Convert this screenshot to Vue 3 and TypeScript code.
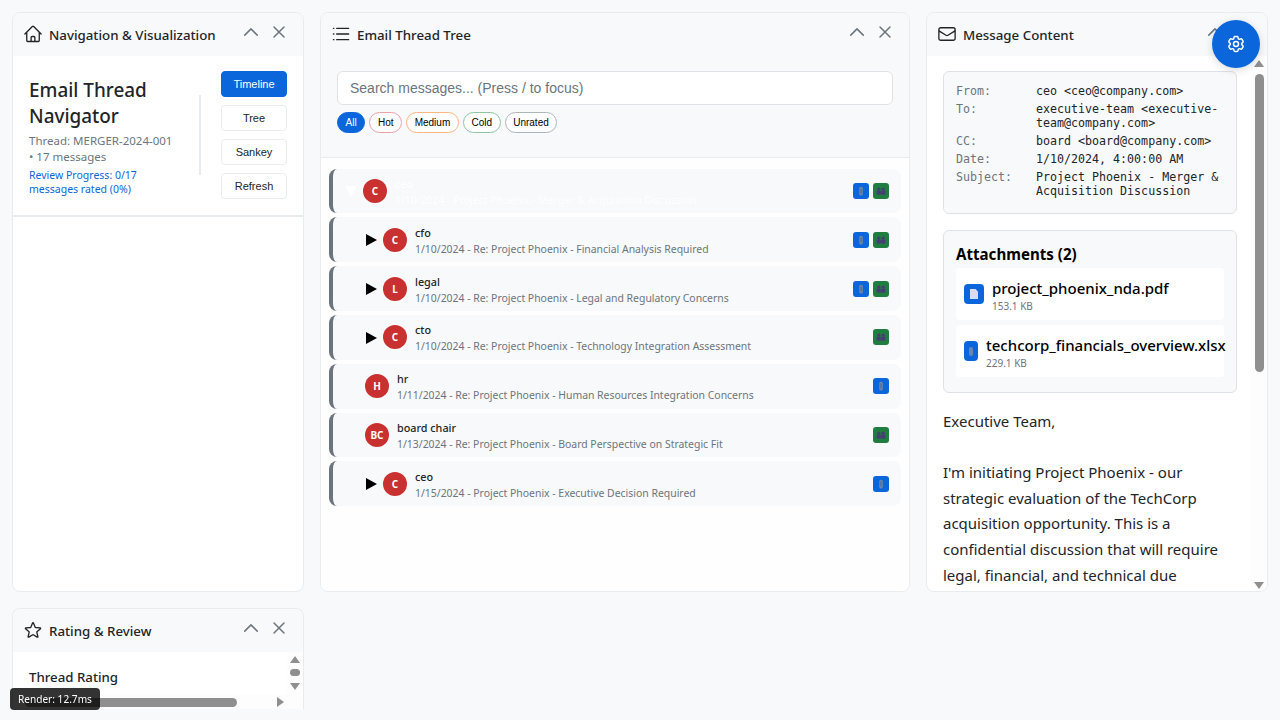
<template>
  <div class="page">
    <section class="panel nav-panel">
      <header class="panel-head">
        <svg class="head-icon" viewBox="0 0 24 24"><path d="M2.25 12l8.954-8.955c.44-.439 1.152-.439 1.591 0L21.75 12M4.5 9.75v10.125c0 .621.504 1.125 1.125 1.125H9.75v-4.875c0-.621.504-1.125 1.125-1.125h2.25c.621 0 1.125.504 1.125 1.125V21h4.125c.621 0 1.125-.504 1.125-1.125V9.75M8.25 21h8.25" /></svg>
        <h2>Navigation &amp; Visualization</h2>
        <div class="head-actions">
          <svg viewBox="0 0 24 24"><path d="M4.5 15.75l7.5-7.5 7.5 7.5" /></svg>
          <svg viewBox="0 0 24 24"><path d="M6 18L18 6M6 6l12 12" /></svg>
        </div>
      </header>
      <div class="nav-top">
        <div class="nav-info">
          <h1>Email Thread Navigator</h1>
          <p class="thread-meta">Thread: MERGER-2024-001 <br />• 17 messages</p>
          <p class="progress">Review Progress: 0/17 messages rated (0%)</p>
        </div>
        <div class="nav-divider"></div>
        <div class="nav-buttons">
          <button class="btn active">Timeline</button>
          <button class="btn">Tree</button>
          <button class="btn">Sankey</button>
          <button class="btn">Refresh</button>
        </div>
      </div>
    </section>

    <section class="panel tree-panel">
      <header class="panel-head">
        <svg class="head-icon" viewBox="0 0 24 24"><path d="M6.8 5.2h14.4M6.8 12h14.4M6.8 18.8h14.4M2.9 5.2h.6M2.9 12h.6M2.9 18.8h.6" /></svg>
        <h2>Email Thread Tree</h2>
        <div class="head-actions">
          <svg viewBox="0 0 24 24"><path d="M4.5 15.75l7.5-7.5 7.5 7.5" /></svg>
          <svg viewBox="0 0 24 24"><path d="M6 18L18 6M6 6l12 12" /></svg>
        </div>
      </header>
      <div class="search-area">
        <input class="search" placeholder="Search messages... (Press / to focus)" />
        <div class="chips">
          <span v-for="c in chips" :key="c.label" class="chip" :class="c.cls">{{ c.label }}</span>
        </div>
      </div>
      <div class="tree-list">
        <div v-for="m in messages" :key="m.sub" class="row" :class="{ selected: m.root, child: !m.root }">
          <span v-if="m.toggle" class="toggle"><i :class="m.root ? 'tri-down' : 'tri-right'"></i></span>
          <span class="avatar">{{ m.initials }}</span>
          <div class="row-text">
            <div class="row-name">{{ m.name }}</div>
            <div class="row-sub">{{ m.sub }}</div>
          </div>
          <div class="row-badges">
            <span v-if="m.clip" class="badge blue">
              <svg viewBox="0 0 16 16"><rect x="6.2" y="3.8" width="3.6" height="8.8" rx="1.6" fill="#6f86a8" /><rect x="7.4" y="5.5" width="1.2" height="5" fill="#4f6a94" /></svg>
            </span>
            <span v-if="m.people" class="badge green">
              <svg viewBox="0 0 16 16"><g fill="#4b3a78"><circle cx="5.8" cy="6.2" r="1.6" /><circle cx="10.2" cy="6.2" r="1.6" /><rect x="3.6" y="7.8" width="4.2" height="3.8" /><rect x="8.2" y="7.8" width="4.2" height="3.8" /></g></svg>
            </span>
          </div>
        </div>
      </div>
    </section>

    <section class="panel message-panel">
      <header class="panel-head">
        <svg class="head-icon" viewBox="0 0 24 24"><path d="M21.75 6.75v10.5a2.25 2.25 0 01-2.25 2.25h-15a2.25 2.25 0 01-2.25-2.25V6.75m19.5 0A2.25 2.25 0 0019.5 4.5h-15a2.25 2.25 0 00-2.25 2.25m19.5 0v.243a2.25 2.25 0 01-1.07 1.916l-7.5 4.615a2.25 2.25 0 01-2.36 0L3.32 8.91a2.25 2.25 0 01-1.07-1.916V6.75" /></svg>
        <h2>Message Content</h2>
        <div class="head-actions">
          <svg viewBox="0 0 24 24"><path d="M4.5 15.75l7.5-7.5 7.5 7.5" /></svg>
          <svg viewBox="0 0 24 24"><path d="M6 18L18 6M6 6l12 12" /></svg>
        </div>
      </header>
      <div class="message-body">
        <div class="message-scroll">
          <div class="mail-head">
            <template v-for="h in mailHead" :key="h.label">
              <span class="mail-label">{{ h.label }}</span>
              <span class="mail-value">{{ h.value }}</span>
            </template>
          </div>
          <div class="attachments">
            <h3>Attachments (2)</h3>
            <div v-for="a in attachments" :key="a.name" class="attachment">
              <span class="att-icon">
                <svg v-if="a.pdf" viewBox="0 0 20 20"><path d="M6 5h5.5L14 7.5V15H6z" fill="#dcdcf0" /></svg>
                <svg v-else viewBox="0 0 14 20"><rect x="5" y="6" width="4" height="9" rx="2" fill="#6f86a8" /></svg>
              </span>
              <div class="att-text">
                <div class="att-name">{{ a.name }}</div>
                <div class="att-size">{{ a.size }}</div>
              </div>
            </div>
          </div>
          <div class="mail-text">{{ mailText }}</div>
        </div>
        <div class="vscroll">
          <span class="arrow up"></span>
          <span class="vthumb"></span>
          <span class="arrow down"></span>
        </div>
      </div>
    </section>

    <section class="panel rating-panel">
      <header class="panel-head">
        <svg class="head-icon" viewBox="0 0 24 24"><path d="M11.48 3.499a.562.562 0 011.04 0l2.125 5.111a.563.563 0 00.475.345l5.518.442c.499.04.701.663.321.988l-4.204 3.602a.563.563 0 00-.182.557l1.285 5.385a.562.562 0 01-.84.61l-4.725-2.885a.562.562 0 00-.586 0L6.982 20.54a.562.562 0 01-.84-.61l1.285-5.386a.562.562 0 00-.182-.557l-4.204-3.602a.563.563 0 01.321-.988l5.518-.442a.563.563 0 00.475-.345L11.48 3.5z" /></svg>
        <h2>Rating &amp; Review</h2>
        <div class="head-actions">
          <svg viewBox="0 0 24 24"><path d="M4.5 15.75l7.5-7.5 7.5 7.5" /></svg>
          <svg viewBox="0 0 24 24"><path d="M6 18L18 6M6 6l12 12" /></svg>
        </div>
      </header>
      <div class="rating-body">
        <div class="rating-main">
          <div class="rating-view"><h4>Thread Rating</h4></div>
          <div class="vscroll small">
            <span class="arrow up"></span>
            <span class="vthumb"></span>
            <span class="arrow down"></span>
          </div>
        </div>
        <div class="hscroll">
          <span class="hthumb"></span>
          <span class="arrow right"></span>
        </div>
      </div>
    </section>

    <button class="fab" aria-label="Settings">
      <svg viewBox="0 0 24 24"><path d="M9.594 3.94c.09-.542.56-.94 1.11-.94h2.593c.55 0 1.02.398 1.11.94l.213 1.281c.063.374.313.686.645.87.074.04.147.083.22.127.324.196.72.257 1.075.124l1.217-.456a1.125 1.125 0 011.37.49l1.296 2.247a1.125 1.125 0 01-.26 1.431l-1.003.827c-.293.24-.438.613-.431.992a6.759 6.759 0 010 .255c-.007.378.138.75.43.99l1.005.828c.424.35.534.954.26 1.43l-1.298 2.247a1.125 1.125 0 01-1.369.491l-1.217-.456c-.355-.133-.75-.072-1.076.124a6.57 6.57 0 01-.22.128c-.331.183-.581.495-.644.869l-.213 1.28c-.09.543-.56.941-1.11.941h-2.594c-.55 0-1.02-.398-1.11-.94l-.213-1.281c-.062-.374-.312-.686-.644-.87a6.52 6.52 0 01-.22-.127c-.325-.196-.72-.257-1.076-.124l-1.217.456a1.125 1.125 0 01-1.369-.49l-1.297-2.247a1.125 1.125 0 01.26-1.431l1.004-.827c.292-.24.437-.613.43-.992a6.932 6.932 0 010-.255c.007-.378-.138-.75-.43-.99l-1.004-.828a1.125 1.125 0 01-.26-1.43l1.297-2.247a1.125 1.125 0 011.37-.491l1.216.456c.356.133.751.072 1.076-.124.072-.044.146-.087.22-.128.332-.183.582-.495.644-.869l.214-1.281z" /><path d="M15 12a3 3 0 11-6 0 3 3 0 016 0z" /></svg>
    </button>
    <div class="render-time">Render: 12.7ms</div>
  </div>
</template>

<script setup lang="ts">
type Message = {
  name: string
  initials: string
  sub: string
  toggle?: boolean
  root?: boolean
  clip?: boolean
  people?: boolean
}

const chips = [
  { label: 'All', cls: 'all' },
  { label: 'Hot', cls: 'hot' },
  { label: 'Medium', cls: 'medium' },
  { label: 'Cold', cls: 'cold' },
  { label: 'Unrated', cls: 'unrated' }
]

const messages: Message[] = [
  { name: 'ceo', initials: 'C', sub: '1/10/2024 - Project Phoenix - Merger & Acquisition Discussion', toggle: true, root: true, clip: true, people: true },
  { name: 'cfo', initials: 'C', sub: '1/10/2024 - Re: Project Phoenix - Financial Analysis Required', toggle: true, clip: true, people: true },
  { name: 'legal', initials: 'L', sub: '1/10/2024 - Re: Project Phoenix - Legal and Regulatory Concerns', toggle: true, clip: true, people: true },
  { name: 'cto', initials: 'C', sub: '1/10/2024 - Re: Project Phoenix - Technology Integration Assessment', toggle: true, people: true },
  { name: 'hr', initials: 'H', sub: '1/11/2024 - Re: Project Phoenix - Human Resources Integration Concerns', clip: true },
  { name: 'board chair', initials: 'BC', sub: '1/13/2024 - Re: Project Phoenix - Board Perspective on Strategic Fit', people: true },
  { name: 'ceo', initials: 'C', sub: '1/15/2024 - Project Phoenix - Executive Decision Required', toggle: true, clip: true }
]

const mailHead = [
  { label: 'From:', value: 'ceo <ceo@company.com>' },
  { label: 'To:', value: 'executive-team <executive-team@company.com>' },
  { label: 'CC:', value: 'board <board@company.com>' },
  { label: 'Date:', value: '1/10/2024, 4:00:00 AM' },
  { label: 'Subject:', value: 'Project Phoenix - Merger & Acquisition Discussion' }
]

const attachments = [
  { name: 'project_phoenix_nda.pdf', size: '153.1 KB', pdf: true },
  { name: 'techcorp_financials_overview.xlsx', size: '229.1 KB', pdf: false }
]

const mailText = `Executive Team,

I'm initiating Project Phoenix - our strategic evaluation of the TechCorp acquisition opportunity. This is a confidential discussion that will require legal, financial, and technical due`
</script>

<style>
html, body { margin: 0; height: 100%; overflow: hidden; background: #f8f9fa; }
</style>

<style scoped>
.page {
  display: grid;
  grid-template-columns: 292px 590px 342px;
  grid-template-rows: 580px 101px;
  gap: 16px;
  padding: 12px;
  height: 720px;
  box-sizing: border-box;
  overflow: hidden;
  font-family: "Noto Sans", sans-serif;
  color: #212529;
}

.panel {
  display: flex;
  flex-direction: column;
  min-height: 0;
  background: #fff;
  border: 1px solid #e9ecef;
  border-radius: 8px;
  overflow: hidden;
}

.panel-head {
  display: flex;
  align-items: center;
  gap: 6px;
  flex: none;
  height: 43px;
  padding: 0 12px 0 10px;
  background: #f8f9fa;
}
.head-icon {
  flex: none;
  width: 20px;
  height: 20px;
  fill: none;
  stroke: #212529;
  stroke-width: 1.6;
  stroke-linecap: round;
  stroke-linejoin: round;
  margin-top: -2px;
}
.panel-head h2 {
  margin: 0;
  flex: 1;
  font-size: 13.3px;
  font-weight: 500;
  line-height: 20px;
}
.head-actions {
  display: flex;
  gap: 8px;
  margin-top: -5px;
  margin-right: 2px;
}
.head-actions svg {
  width: 20px;
  height: 20px;
  fill: none;
  stroke: #6c757d;
  stroke-width: 1.8;
  stroke-linecap: round;
  stroke-linejoin: round;
}

.nav-top {
  display: flex;
  align-items: center;
  padding: 15px 16px 16px;
  border-bottom: 2px solid #e9ecef;
}
.nav-info {
  flex: 1;
  min-width: 0;
  align-self: flex-start;
  padding: 6px 12px 0 0;
}
.nav-info h1 {
  margin: 0;
  font-size: 18.9px;
  font-weight: 500;
  line-height: 26px;
}
.thread-meta {
  margin: 4px -12px 0 0;
  font-size: 11.5px;
  line-height: 16px;
  color: #6c757d;
}
.progress {
  margin: 2.5px 0 0;
  font-size: 10.5px;
  line-height: 14px;
  color: #0b66dc;
}
.nav-divider {
  flex: none;
  width: 2px;
  height: 80px;
  margin: 0 20px 0 10px;
  background: #e9ecef;
}
.nav-buttons {
  display: flex;
  flex-direction: column;
  gap: 8px;
  flex: none;
}
.btn {
  width: 66px;
  height: 26px;
  padding: 0;
  background: #fff;
  border: 1px solid #e9ecef;
  border-radius: 4px;
  font-family: "Liberation Sans", sans-serif;
  font-size: 11px;
  color: #212529;
}
.btn.active {
  background: #0b66dc;
  border-color: #0b66dc;
  color: #fff;
}

.search-area {
  flex: none;
  height: 102px;
  padding: 15px 16px 0;
  box-sizing: border-box;
  background: #f8f9fa;
  border-bottom: 1px solid #e9ecef;
}
.search {
  display: block;
  width: 100%;
  height: 34px;
  box-sizing: border-box;
  padding: 0 12px;
  background: #fff;
  border: 1px solid #dee2e6;
  border-radius: 6px;
  font-family: "Liberation Sans", sans-serif;
  font-size: 14px;
  outline: none;
}
.search::placeholder { color: #6c757d; opacity: 1; }
.chips {
  display: flex;
  gap: 4px;
  margin-top: 7px;
}
.chip {
  height: 21px;
  padding: 0 7.6px;
  box-sizing: border-box;
  border: 1px solid #ced4da;
  border-radius: 11px;
  background: #fff;
  font-family: "Liberation Sans", sans-serif;
  font-size: 10px;
  line-height: 19px;
  color: #000;
}
.chip.all { background: #0b66dc; border-color: #0b66dc; color: #fff; }
.chip.hot { border-color: #e9a0a8; }
.chip.medium { border-color: #fdb67e; }
.chip.cold { border-color: #8cc4a4; }
.chip.unrated { border-color: #adb5bd; }

.tree-list {
  flex: 1;
  padding: 10.7px 8px;
  background: #fefefe;
  overflow: hidden;
}
.row {
  display: flex;
  align-items: center;
  height: 44.8px;
  margin-bottom: 4px;
  padding: 0 12px;
  box-sizing: border-box;
  background: #f8f9fa;
  border-left: 4px solid #6c757d;
  border-radius: 8px;
}
.row.child { padding-left: 32px; }
.toggle {
  flex: none;
  width: 18px;
}
.toggle i { display: block; width: 0; height: 0; border-style: solid; border-color: transparent; }
.tri-right { margin: 1px 0 0 1px; border-width: 6.5px 0 6.5px 11px; border-left-color: #000 !important; }
.tri-down { border-width: 11px 6px 0; border-top-color: #fff !important; }
.avatar {
  display: flex;
  align-items: center;
  justify-content: center;
  flex: none;
  width: 24px;
  height: 24px;
  margin-right: 8px;
  border-radius: 50%;
  background: #c93030;
  color: #fff;
  font-size: 10px;
  font-weight: 700;
}
.row-text { flex: 1; min-width: 0; padding-top: 0.8px; }
.row-name {
  font-size: 10.8px;
  font-weight: 500;
  line-height: 15px;
  margin-bottom: 2px;
}
.row-sub {
  font-size: 10.43px;
  line-height: 14px;
  color: #6c757d;
}
.selected .row-name, .selected .row-sub { color: #fff; }
.row-badges {
  display: flex;
  gap: 4px;
  flex: none;
}
.badge {
  display: block;
  width: 16px;
  height: 16px;
  border-radius: 3px;
}
.badge svg { display: block; width: 16px; height: 16px; }
.badge.blue { background: #0b66dc; }
.badge.green { background: #1f7d3f; }

.message-body {
  flex: 1;
  display: flex;
  min-height: 0;
}
.message-scroll {
  flex: 1;
  min-width: 0;
  padding: 15px 14px 0 16px;
  overflow: hidden;
}
.mail-head {
  display: grid;
  grid-template-columns: 68px 1fr;
  gap: 4px 12px;
  padding: 12px 12px 15px;
  background: #f8f9fa;
  border: 1px solid #dee2e6;
  border-radius: 6px;
  font-family: "DejaVu Sans Mono", monospace;
  font-size: 11.65px;
  line-height: 14px;
}
.mail-label { color: #6c757d; font-weight: 500; }
.attachments {
  margin-top: 16px;
  padding: 13px 12px 15px;
  background: #f8f9fa;
  border: 1px solid #dee2e6;
  border-radius: 6px;
}
.attachments h3 {
  margin: 0 0 3px;
  font-size: 15.1px;
  font-weight: 700;
  line-height: 21px;
  color: #000;
}
.attachment {
  display: flex;
  align-items: center;
  gap: 8px;
  height: 52px;
  margin-bottom: 4.5px;
  padding: 0 8px;
  background: #fff;
  border-radius: 4px;
}
.attachment:last-child { margin-bottom: 0; }
.att-icon {
  flex: 0 1 20px;
  min-width: 14px;
  height: 20px;
  background: #0b66dc;
  border-radius: 4px;
}
.att-icon svg { display: block; width: 100%; height: 100%; }
.att-text { white-space: nowrap; padding-top: 3px; }
.att-name {
  font-size: 15px;
  font-weight: 500;
  line-height: 20px;
  margin-bottom: 1px;
  color: #000;
}
.att-size {
  font-size: 10px;
  line-height: 14px;
  color: #6c757d;
}
.mail-text {
  margin-top: 16.6px;
  font-size: 15px;
  line-height: 25.6px;
  white-space: pre-wrap;
}

.vscroll {
  display: flex;
  flex-direction: column;
  align-items: center;
  flex: none;
  width: 16px;
  padding: 4px 0 2px;
  box-sizing: border-box;
  background: #fdfdfd;
}
.vthumb {
  width: 9px;
  height: 298px;
  margin-top: 7px;
  border-radius: 5px;
  background: #8f8f8f;
}
.arrow { display: block; width: 0; height: 0; border-style: solid; border-color: transparent; }
.arrow.up { border-width: 0 5px 7px; border-bottom-color: #8f8f8f; }
.arrow.down { border-width: 7px 5px 0; border-top-color: #8f8f8f; margin-top: auto; }
.arrow.right { border-width: 5px 0 5px 7px; border-left-color: #8f8f8f; margin-left: auto; margin-right: 19px; }

.rating-panel {
  border-bottom: none;
  border-radius: 8px 8px 0 0;
}
.rating-body {
  flex: 1;
  display: flex;
  flex-direction: column;
  min-height: 0;
}
.rating-main {
  flex: 1;
  display: flex;
  min-height: 0;
}
.rating-view { flex: 1; min-width: 0; padding: 15px 16px 0; overflow: hidden; }
.rating-view h4 {
  margin: 0;
  font-size: 13.25px;
  font-weight: 500;
  line-height: 20px;
}
.hscroll {
  display: flex;
  align-items: center;
  flex: none;
  height: 14px;
  padding-left: 12px;
  background: #fdfdfd;
}
.hthumb {
  width: 212px;
  height: 9px;
  border-radius: 5px;
  background: #8f8f8f;
}
.vscroll.small .vthumb { width: 10px; height: 7px; margin-top: 6px; }
.vscroll.small { padding: 4px 0 0; }
.vscroll.small .arrow.down { margin-top: 7px; }

.fab {
  position: fixed;
  top: 20px;
  right: 20px;
  display: flex;
  align-items: center;
  justify-content: center;
  width: 48px;
  height: 48px;
  padding: 0;
  border: none;
  border-radius: 50%;
  background: #0b66dc;
  box-shadow: 0 2px 8px rgba(0, 0, 0, 0.15);
}
.fab svg {
  width: 20px;
  height: 20px;
  fill: none;
  stroke: #fff;
  stroke-width: 1.8;
  stroke-linecap: round;
  stroke-linejoin: round;
}
.render-time {
  position: fixed;
  left: 10px;
  bottom: 10px;
  width: 90px;
  height: 22px;
  box-sizing: border-box;
  padding-left: 8px;
  background: rgba(0, 0, 0, 0.8);
  border-radius: 4px;
  font-family: "Noto Sans", sans-serif;
  font-size: 10.1px;
  line-height: 22px;
  color: #fff;
}
</style>
